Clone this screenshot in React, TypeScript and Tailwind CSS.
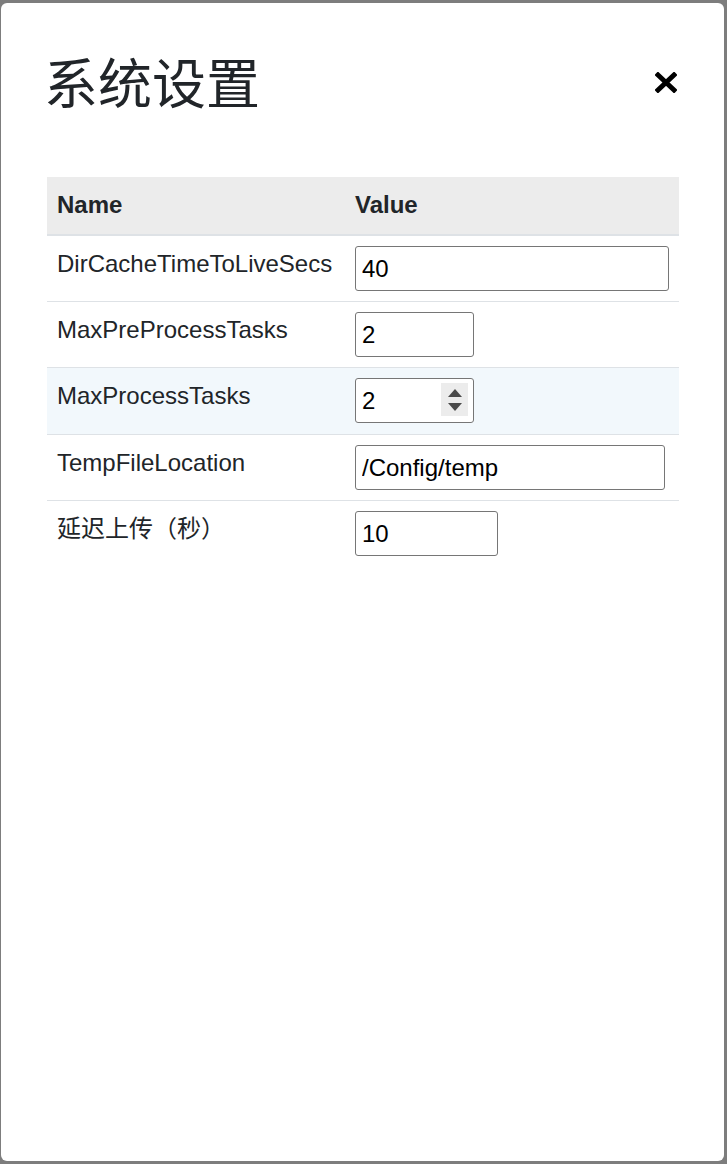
import React from "react";

type Setting = {
  name: string;
  value: string;
  width: string;
  spinner?: boolean;
  hover?: boolean;
};

const settings: Setting[] = [
  { name: "DirCacheTimeToLiveSecs", value: "40", width: "w-[314px]" },
  { name: "MaxPreProcessTasks", value: "2", width: "w-[119px]" },
  { name: "MaxProcessTasks", value: "2", width: "w-[119px]", spinner: true, hover: true },
  { name: "TempFileLocation", value: "/Config/temp", width: "w-[310px]" },
  { name: "延迟上传（秒）", value: "10", width: "w-[143px]" },
];

function Spinner() {
  return (
    <div className="absolute right-[6px] top-[5px] flex h-[33px] w-[27px] flex-col items-center justify-center gap-[6px] bg-[#ececec]">
      <svg width="14" height="8" viewBox="0 0 14 8">
        <path d="M7 0 L14 8 L0 8 Z" fill="#4a4a4a" />
      </svg>
      <svg width="14" height="8" viewBox="0 0 14 8">
        <path d="M0 0 L14 0 L7 8 Z" fill="#4a4a4a" />
      </svg>
    </div>
  );
}

export default function App() {
  return (
    <div className="h-[1164px] bg-[#7d7d7d] pt-[3px] pb-[3px] pl-[1px] pr-[3px] font-['Liberation_Sans','Noto_Sans_CJK_SC',sans-serif]">
      <div className="h-full rounded-[6px] bg-white pl-[46px] pr-[45px] pt-[51px]">
        {/* Header */}
        <div className="flex items-center justify-between">
          <h1 className="-ml-[3px] h-[53px] text-[54px] leading-none font-normal text-[#212529] font-['Noto_Sans_CJK_SC',sans-serif]">
            系统设置
          </h1>
          <svg width="22" height="21" viewBox="0 0 22 21" className="mr-[2px] mt-[4px]">
            <path d="M3 3 L19 18 M19 3 L3 18" stroke="#000" strokeWidth="5" strokeLinecap="square" />
          </svg>
        </div>

        {/* Settings table */}
        <table className="mt-[70px] w-full border-collapse text-[24px] text-[#212529]">
          <thead>
            <tr className="bg-[#ececec]">
              <th className="w-[298px] border-b-2 border-[#dee2e6] px-[10px] pt-[10px] pb-[11px] text-left leading-[36px] font-bold">
                Name
              </th>
              <th className="border-b-2 border-[#dee2e6] px-[10px] pt-[10px] pb-[11px] text-left leading-[36px] font-bold">
                Value
              </th>
            </tr>
          </thead>
          <tbody>
            {settings.map((s, i) => (
              <tr
                key={s.name}
                className={`${i < settings.length - 1 ? "border-b border-[#dee2e6]" : ""} ${s.hover ? "bg-[#f2f8fc]" : ""}`}
              >
                <td className="px-[10px] pt-[11px] pb-[9px] align-top leading-[33px] whitespace-nowrap">
                  {s.name}
                </td>
                <td className={`px-[10px] pt-[10px] ${s.hover ? "pb-[11px]" : "pb-[10px]"} align-top`}>
                  <div className={`relative ${s.width}`}>
                    <input
                      type="text"
                      defaultValue={s.value}
                      className="block h-[45px] w-full rounded-[3px] border border-[#767676] bg-white px-[6px] text-[24px] text-black outline-none"
                    />
                    {s.spinner && <Spinner />}
                  </div>
                </td>
              </tr>
            ))}
          </tbody>
        </table>
      </div>
    </div>
  );
}
